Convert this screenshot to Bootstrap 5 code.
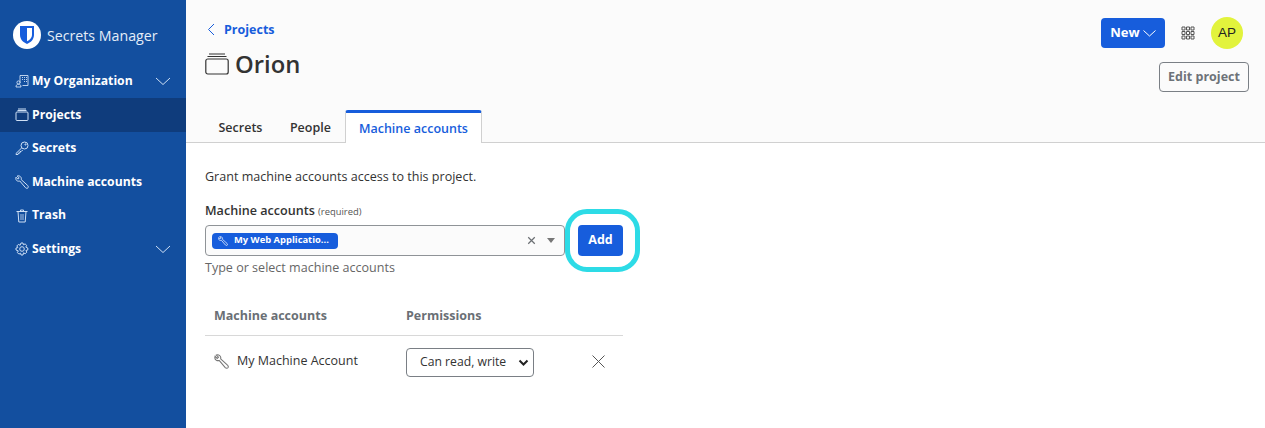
<!doctype html>
<html lang="en"><head><meta charset="utf-8"><title>Orion</title>
<link href="https://cdn.jsdelivr.net/npm/bootstrap@5.3.0/dist/css/bootstrap.min.css" rel="stylesheet">
<style>
html,body{height:428px;overflow:hidden}
body{font-family:"Open Sans",sans-serif;font-size:13px;color:#333;background:#fbfbfb}
.side{width:186px;height:428px;background:#134f9f;color:#fff;flex:none}
.brand{height:64.4px;flex:none;padding:21px 0 0 13px;gap:6px;font-size:14.2px;font-weight:400;color:#e4edf8}
.logo{width:28px;height:28px;border-radius:50%;background:#fff;flex:none}
.item{height:33.6px;flex:none;padding:0 15px;font-weight:700;font-size:12.2px;color:#fff;gap:3px}
.item.on{background:#0f3c7c}
.item svg.ic{width:14px;height:14px;flex:none;color:#cfe0f5}
.chev{margin-left:auto;width:16px;height:9px;color:#cfe0f5}
.mainp{min-width:0;height:428px}
.head{height:110px;padding:0 16px 0 19px}
.back{color:#175ddc;font-weight:700;font-size:12.5px;text-decoration:none;gap:9px;padding-top:21px;height:48px;align-items:flex-start!important;padding-left:2px}
.back svg{margin-top:2px}
.ttl{font-size:23.8px;font-weight:600;color:#333;margin:0;gap:6px;line-height:32px}
.btnew{background:#175ddc;border:0;color:#fff;font-weight:700;font-size:13px;border-radius:4px;width:64px;height:30px;padding:0;gap:3px}
.topr{margin-right:6px;margin-top:1px}
.avatar{width:32px;height:32px;border-radius:50%;background:#e2f33c;color:#222;font-family:"Liberation Sans",sans-serif;font-size:13.5px}
.edit{border:1px solid #7a7f85;border-radius:4px;color:#6d7278;background:transparent;font-weight:700;font-size:12.5px;width:90px;height:30px;padding:0;margin-top:13px}
.tabsrow{height:33px;border-bottom:1px solid #d0d0d0;padding-left:18.500px;align-items:flex-end}
.tabx{font-weight:600;font-size:12.5px;color:#333;height:32px;padding:0 14px;line-height:36px;white-space:nowrap}
.tabx.ppl{margin-left:-.5px}
.tabx.sel{color:#175ddc;background:#fff;border:1px solid #d0d0d0;border-top:3px solid #175ddc;border-bottom:0;border-radius:3px 3px 0 0;height:33px;padding:0;line-height:32px;margin-bottom:-1px;width:137px}
.body{padding:0 0 0 19px;background:#fff;height:285px}
.intro{padding-top:25px;line-height:18px;height:60px;font-size:12.55px;color:#333}
.lbl{font-weight:600;font-size:12.6px;color:#333;line-height:16px;height:22px;padding-top:0}
.lbl span{font-weight:400;font-size:9.4px;color:#555}
.pick{width:360px;height:31px;border:1px solid #8f9397;border-radius:4px;background:#fbfbfb;padding:0 9px 0 6px}
.chip{width:126px;height:16px;background:#175ddc;border-radius:4px;color:#fff;font-weight:700;font-size:9.4px;gap:6px;padding-left:6px;white-space:nowrap}
.clr{margin-left:auto;color:#6b6f73;width:9px;height:9px}
.caret{width:0;height:0;border:4.5px solid transparent;border-top:5px solid #777;border-bottom:0;margin-left:11px}
.wrapadd{margin-left:13px}
.addb{width:45px;height:31px;background:#175ddc;color:#fff;font-weight:700;font-size:12.5px;border:0;border-radius:4px;padding:0}
.ring{position:absolute;left:-13px;top:-16px;width:75px;height:63px;border:5px solid #2ddbe6;border-radius:22px;pointer-events:none}
.help{color:#666;font-size:12.55px;line-height:18px;height:37px;padding-top:3px}
.perm{width:418px;margin:0}
.thd{height:43px;border-bottom:1px solid #d8d8d8;color:#6a6f75;font-weight:700;font-size:12.5px;padding-left:9px;padding-top:14px}
.thd .c1,.rowx .c1{width:192px}
.rowx{height:50px;padding-left:9px}
.rowx .c1{gap:8px;font-size:12.5px;color:#333}
.sel-perm{width:128px;height:29px;padding:0 20px 0 13px;font-size:12.2px;color:#333;border:1px solid #7a7f85;border-radius:4px;background-color:#fff;background-position:right 4px center;background-size:11px 9px;margin-top:3px;background-image:url("data:image/svg+xml,%3csvg xmlns='http://www.w3.org/2000/svg' viewBox='0 0 11 9'%3e%3cpath fill='none' stroke='%23222' stroke-width='2' d='M1.500 2.500l4 4 4-4'/%3e%3c/svg%3e")}
.xb{margin-left:58px;width:13px;height:13px;color:#555}
</style></head>
<body>
<div class="d-flex">
<nav class="side d-flex flex-column">
  <div class="brand d-flex align-items-start">
    <span class="logo d-flex align-items-center justify-content-center">
      <svg width="16" height="18" viewBox="0 0 16 18"><path fill="#175ddc" d="M1 0h14v9c0 4.500-3.500 7.500-7 9-3.500-1.500-7-4.500-7-9z"/><path fill="#fff" d="M8 2h5v7c0 3-2.500 5-5 6.300z"/></svg>
    </span>
    <span class="pt-1">Secrets Manager</span>
  </div>
  <div class="item d-flex align-items-center"><svg class="ic" viewBox="0 0 14 14" fill="none" stroke="currentColor" stroke-width=".9"><path d="M5 9V1.500h8v10H7.500M7 3.500h1M9 3.500h1M11 3.500h1M7 5.500h1M9 5.500h1M11 5.500h1M9 7.500h1M11 7.500h1"/><circle cx="3.500" cy="8.500" r="1.600"/><path d="M1 13c0-2 1-2.800 2.500-2.800S6 11 6 13z"/></svg>My Organization<svg class="chev" viewBox="0 0 16 9" fill="none" stroke="currentColor"><path d="M1 1l7 6.500L15 1"/></svg></div>
  <div class="item on d-flex align-items-center"><svg class="ic" viewBox="0 0 14 14" fill="none" stroke="currentColor"><rect x="1" y="4" width="12" height="8.500" rx="1"/><path d="M2.500 2.500h9M3 1h8"/></svg>Projects</div>
  <div class="item d-flex align-items-center"><svg class="ic" viewBox="0 0 14 14" fill="none" stroke="currentColor"><circle cx="9.500" cy="4.500" r="3.500"/><path d="M6.800 6.800L1 12.500v1h2l.5-1.500H5V10.500h1.200l1.500-1.500"/><circle cx="10.500" cy="3.500" r=".6"/></svg>Secrets</div>
  <div class="item d-flex align-items-center"><svg class="ic" viewBox="0 0 14 14" fill="none" stroke="currentColor"><path d="M2.200 1L4.200 3 3 4.200 1 2.200C.5 4 1 5.500 2.500 6c.8.300 1.500.2 2.300 0l5.700 6.700c.8.800 2 .8 2.500.1.500-.8.300-1.800-.4-2.400L6.200 4.600c.3-1.100.1-2.300-.9-3.100C4.400.8 3.200.6 2.200 1z"/></svg>Machine accounts</div>
  <div class="item d-flex align-items-center"><svg class="ic" viewBox="0 0 14 14" fill="none" stroke="currentColor"><path d="M1.500 2.500h11M3 2.500l.8 10.500h6.400L11 2.500M5.500 2.500V1h3v1.500"/><path d="M5 6h4M5 8h4M5 10h4" stroke-width=".8"/></svg>Trash</div>
  <div class="item d-flex align-items-center"><svg class="ic" viewBox="0 0 14 14" fill="none" stroke="currentColor"><circle cx="7" cy="7" r="2.300"/><path d="M6 1h2l.4 1.800 1.700-.9 1.600 1.500-.9 1.700L12.800 6v2l-1.900.5.900 1.700-1.600 1.500-1.700-.9L8 13H6l-.4-1.800-1.700.9-1.500-1.500.9-1.700L1 8V6l1.800-.4-.9-1.700 1.500-1.500 1.700.9z"/></svg>Settings<svg class="chev" viewBox="0 0 16 9" fill="none" stroke="currentColor"><path d="M1 1l7 6.500L15 1"/></svg></div>
</nav>
<main class="mainp flex-grow-1 d-flex flex-column">
  <header class="head d-flex justify-content-between">
    <div>
      <a class="back d-flex align-items-center" href="#"><svg width="8" height="13" viewBox="0 0 8 13" fill="none" stroke="#175ddc"><path d="M7 1L1.500 6.500 7 12"/></svg>Projects</a>
      <h1 class="ttl d-flex align-items-center"><svg width="24" height="22" viewBox="0 0 24 22" fill="none" stroke="#333" stroke-width="1.200"><rect x=".8" y="6" width="22.400" height="15" rx="2"/><path d="M2.500 3.500h19M4 1h16"/></svg>Orion</h1>
    </div>
    <div class="d-flex flex-column align-items-end pt-3">
      <div class="d-flex align-items-center topr">
        <button class="btnew d-flex align-items-center justify-content-center">New<svg width="13" height="7" viewBox="0 0 13 7" fill="none" stroke="#fff"><path d="M.5.500l6 5.500 6-5.500"/></svg></button>
        <svg class="mx-3" width="14" height="14" viewBox="0 0 14 14" fill="none" stroke="#555"><path d="M1 1h3v3H1zM5.500 1h3v3h-3zM10 1h3v3h-3zM1 5.500h3v3H1zM5.500 5.500h3v3h-3zM10 5.500h3v3h-3zM1 10h3v3H1zM5.500 10h3v3h-3zM10 10h3v3h-3z"/></svg>
        <span class="avatar d-flex align-items-center justify-content-center">AP</span>
      </div>
      <button class="edit">Edit project</button>
    </div>
  </header>
  <div class="tabsrow d-flex">
    <div class="tabx">Secrets</div><div class="tabx ppl">People</div><div class="tabx sel text-center">Machine accounts</div>
  </div>
  <section class="body">
    <div class="intro">Grant machine accounts access to this project.</div>
    <div class="lbl">Machine accounts <span>(required)</span></div>
    <div class="d-flex">
      <div class="pick d-flex align-items-center">
        <span class="chip d-flex align-items-center"><svg width="10" height="10" viewBox="0 0 14 14" fill="none" stroke="#fff"><path d="M2.200 1L4.200 3 3 4.200 1 2.200C.5 4 1 5.500 2.500 6c.8.300 1.500.2 2.300 0l5.700 6.700c.8.800 2 .8 2.500.1.500-.8.300-1.800-.4-2.400L6.200 4.600c.3-1.100.1-2.300-.9-3.100C4.400.8 3.200.6 2.200 1z"/></svg>My Web Applicatio...</span>
        <svg class="clr" viewBox="0 0 11 11" fill="none" stroke="currentColor" stroke-width="1.500"><path d="M1.500 1.500l8 8M9.500 1.500l-8 8"/></svg>
        <span class="caret"></span>
      </div>
      <div class="wrapadd position-relative"><button class="addb">Add</button><span class="ring"></span></div>
    </div>
    <div class="help">Type or select machine accounts</div>
    <div class="perm">
      <div class="thd d-flex"><div class="c1">Machine accounts</div><div>Permissions</div></div>
      <div class="rowx d-flex align-items-center">
        <div class="c1 d-flex align-items-center"><svg width="15" height="15" viewBox="0 0 14 14" fill="none" stroke="#777"><path d="M2.200 1L4.200 3 3 4.200 1 2.200C.5 4 1 5.500 2.500 6c.8.300 1.500.2 2.300 0l5.700 6.700c.8.800 2 .8 2.500.1.500-.8.300-1.800-.4-2.400L6.200 4.600c.3-1.100.1-2.300-.9-3.100C4.400.8 3.200.6 2.200 1z"/></svg>My Machine Account</div>
        <select class="form-select sel-perm"><option>Can read, write</option></select>
        <svg class="xb" viewBox="0 0 13 13" fill="none" stroke="currentColor"><path d="M.5.500l12 12M12.500.500l-12 12"/></svg>
      </div>
    </div>
  </section>
</main>
</div>
<script src="https://cdn.jsdelivr.net/npm/bootstrap@5.3.0/dist/js/bootstrap.bundle.min.js"></script>
</body></html>
